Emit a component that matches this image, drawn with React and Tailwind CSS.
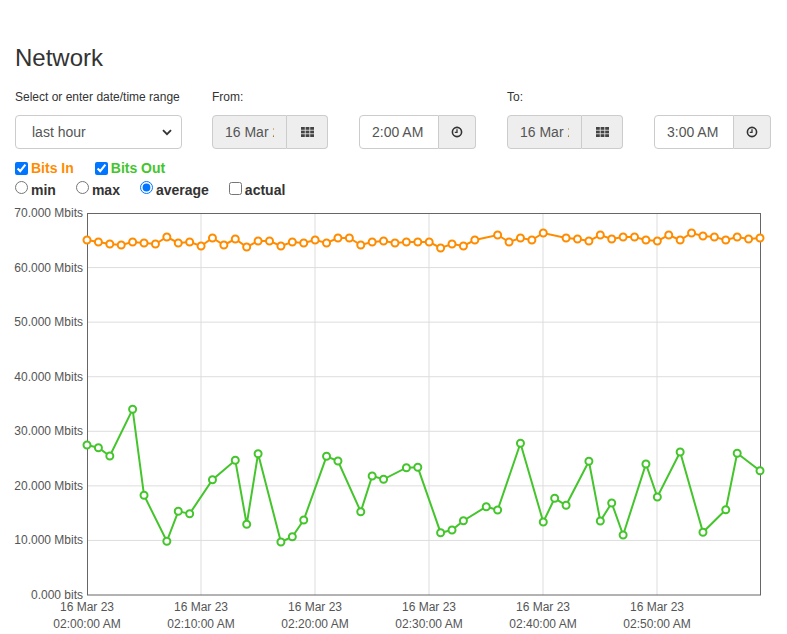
import React from 'react';

const STEP = 673 / 59;

// pixel y of each sample, by minute index (null = no sample)
const bitsIn = [
  240, 242, 244, 245, 242, 243, 244, 237, 243, 242, 246, 238, 245, 239, 247, 241, 241, 246, 242, 243,
  240, 243, 238, 238, 245, 242, 241, 243, 242, 242, 242, 248, 244, 246, 240, null, 235, 242, 238, 240,
  233, null, 238, 239, 241, 235, 239, 237, 237, 240, 241, 235, 240, 233, 236, 237, 240, 237, 239, 238,
];

const bitsOut = {
  0: 445, 1: 447.7, 2: 456, 4: 409.3, 5: 495.3, 7: 541.3, 8: 511.3, 9: 513.7, 11: 479.7, 13: 460.3,
  14: 524.3, 15: 453.7, 17: 542, 18: 536.7, 19: 520, 21: 456.3, 22: 461, 24: 511.7, 25: 476, 26: 479.3,
  28: 467.7, 29: 467.3, 31: 532.7, 32: 530, 33: 520.7, 35: 506.7, 36: 510, 38: 443.3, 40: 522, 41: 498.3,
  42: 505.3, 44: 461.3, 45: 521, 46: 503, 47: 535, 49: 464, 50: 497, 52: 452, 54: 532.3, 56: 509.7,
  57: 453.3, 59: 470.7,
};

const inPoints = bitsIn
  .map((y, i) => (y == null ? null : [87 + i * STEP, y]))
  .filter(Boolean);
const outPoints = Object.entries(bitsOut).map(([i, y]) => [87 + Number(i) * STEP, y]);

const yTicks = [0, 1, 2, 3, 4, 5, 6, 7].map((k) => ({
  y: 595 - k * (382 / 7),
  label: k === 0 ? '0.000 bits' : `${k}0.000 Mbits`,
}));

const xTicks = ['02:00:00 AM', '02:10:00 AM', '02:20:00 AM', '02:30:00 AM', '02:40:00 AM', '02:50:00 AM'];

const GridIcon = () => (
  <svg width="13" height="10" viewBox="0 0 13 10" fill="#444">
    {[0, 1, 2].map((r) =>
      [0, 1, 2].map((c) => <rect key={`${r}${c}`} x={c * 4.6} y={r * 3.6} width="3.8" height="2.8" />)
    )}
  </svg>
);

const ClockIcon = () => (
  <svg width="12" height="12" viewBox="0 0 12 12" fill="none" stroke="#333" strokeWidth="1.6">
    <circle cx="6" cy="6" r="4.6" />
    <path d="M6 3.2V6.4H3.8" strokeWidth="1.3" />
  </svg>
);

const DateGroup = () => (
  <div className="flex h-[34px] w-[116px]">
    <input
      readOnly
      value="16 Mar 23"
      className="w-[75px] min-w-0 h-full rounded-l-[4px] border border-[#ccc] bg-[#eee] px-3 text-[14px] text-[#555] outline-none"
    />
    <div className="w-[41px] h-full flex items-center justify-center rounded-r-[4px] border border-l-0 border-[#ccc] bg-[#eee]">
      <GridIcon />
    </div>
  </div>
);

const TimeGroup = ({ value }) => (
  <div className="flex h-[34px] w-[117px]">
    <input
      readOnly
      value={value}
      className="w-[80px] min-w-0 h-full rounded-l-[4px] border border-[#ccc] bg-white px-3 text-[14px] text-[#555] outline-none"
    />
    <div className="w-[37px] h-full flex items-center justify-center rounded-r-[4px] border border-l-0 border-[#ccc] bg-[#eee]">
      <ClockIcon />
    </div>
  </div>
);

const Chart = () => {
  const line = (pts) => pts.map((p) => p.join(',')).join(' ');
  return (
    <svg width="787" height="433" viewBox="0 201 787 433" className="block">
      {yTicks.slice(1, 7).map((t) => (
        <line key={t.y} x1="87" x2="760" y1={t.y} y2={t.y} stroke="#ddd" strokeWidth="1" />
      ))}
      {[1, 2, 3, 4, 5].map((k) => (
        <line key={k} x1={87 + k * 114} x2={87 + k * 114} y1="213" y2="595" stroke="#ddd" strokeWidth="1" />
      ))}
      <rect x="87.5" y="213.5" width="673" height="381.5" fill="none" stroke="#666" strokeWidth="1" />
      {yTicks.map((t) => (
        <text key={t.label} x="83" y={t.y + 4} textAnchor="end" fontSize="12" fill="#555">
          {t.label}
        </text>
      ))}
      {xTicks.map((label, k) => (
        <g key={label} fontSize="12" fill="#555" textAnchor="middle">
          <text x={87 + k * 114} y="611">16 Mar 23</text>
          <text x={87 + k * 114} y="628">{label}</text>
        </g>
      ))}

      <polyline points={line(inPoints)} fill="none" stroke="#ff8c00" strokeWidth="2" />
      {inPoints.map(([x, y]) => (
        <circle key={x} cx={x} cy={y} r="3.5" fill="#fff" stroke="#ff8c00" strokeWidth="2" />
      ))}

      <polyline points={line(outPoints)} fill="none" stroke="#44c52c" strokeWidth="2" />
      {outPoints.map(([x, y]) => (
        <circle key={x} cx={x} cy={y} r="3.5" fill="#fff" stroke="#44c52c" strokeWidth="2" />
      ))}
    </svg>
  );
};

export default function App() {
  return (
    <div className="w-[787px] h-[634px] overflow-hidden bg-white text-[#333] font-['Liberation_Sans',Arial,sans-serif]">
      <div className="px-[15px] pt-[45px]">
        {/* Заголовок */}
        <h1 className="text-[24px] leading-[26px] font-normal text-[#333]">Network</h1>

        {/* Вибір діапазону */}
        <div className="flex mt-[18px]">
          <div className="w-[167px]">
            <div className="text-[12px] leading-[17px] mb-[9px]">Select or enter date/time range</div>
            <div className="relative h-[34px] rounded-[4px] border border-[#ccc] bg-white flex items-center pl-4 text-[14px] text-[#555]">
              last hour
              <svg className="absolute right-[9px] top-[13px]" width="10" height="7" viewBox="0 0 10 7" fill="none" stroke="#333" strokeWidth="1.8">
                <path d="M1 1.2L5 5.2L9 1.2" />
              </svg>
            </div>
          </div>

          <div className="w-[264px] ml-[30px]">
            <div className="text-[12px] leading-[17px] mb-[9px]">From:</div>
            <div className="flex gap-[31px]">
              <DateGroup />
              <TimeGroup value="2:00 AM" />
            </div>
          </div>

          <div className="w-[264px] ml-[31px]">
            <div className="text-[12px] leading-[17px] mb-[9px]">To:</div>
            <div className="flex gap-[31px]">
              <DateGroup />
              <TimeGroup value="3:00 AM" />
            </div>
          </div>
        </div>

        {/* Серії */}
        <div className="flex items-center gap-[21px] h-[24px] mt-[7px] text-[14px] font-bold">
          <label className="flex items-center gap-[3px] text-[#ff8c00]">
            <input type="checkbox" defaultChecked className="m-0 w-[13px] h-[13px]" />
            Bits In
          </label>
          <label className="flex items-center gap-[3px] text-[#44c52c]">
            <input type="checkbox" defaultChecked className="m-0 w-[13px] h-[13px]" />
            Bits Out
          </label>
        </div>

        <div className="flex items-center gap-[20px] h-[21px] pb-px text-[14px] font-bold text-[#333]">
          <label className="flex items-center gap-[3px]">
            <input type="radio" name="agg" className="m-0 w-[13px] h-[13px] -mt-[6px]" />
            min
          </label>
          <label className="flex items-center gap-[3px]">
            <input type="radio" name="agg" className="m-0 w-[13px] h-[13px] -mt-[6px]" />
            max
          </label>
          <label className="flex items-center gap-[3px]">
            <input type="radio" name="agg" defaultChecked className="m-0 w-[13px] h-[13px] -mt-[6px]" />
            average
          </label>
          <label className="flex items-center gap-[3px]">
            <input type="checkbox" className="m-0 w-[13px] h-[13px] -mt-[4px]" />
            actual
          </label>
        </div>
      </div>

      {/* Графік */}
      <Chart />
    </div>
  );
}
